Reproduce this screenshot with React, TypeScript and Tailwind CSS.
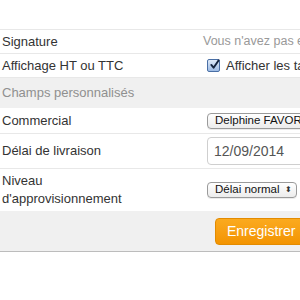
import React from 'react';

const font = { fontFamily: '"Liberation Sans", Arial, sans-serif' };

const Row: React.FC<{ label: React.ReactNode; h: string; children?: React.ReactNode }> = ({ label, h, children }) => (
  <div className={`flex items-center border-b border-[#e8e8e8] ${h}`}>
    <div className="w-[207px] shrink-0 pl-[2px] text-[13px] leading-[18px] text-[#333]">{label}</div>
    <div className="flex min-w-0 flex-1 items-center whitespace-nowrap">{children}</div>
  </div>
);

const FakeSelect: React.FC<{ text: string; w: string; arrow?: boolean }> = ({ text, w, arrow }) => (
  <div
    className={`flex h-[16px] shrink-0 items-center justify-between whitespace-nowrap rounded-[4px] border border-[#9a9a9a] bg-gradient-to-b from-white to-[#ececec] pl-[7px] pr-[4px] text-[11.5px] text-[#111] shadow-[0_1px_0_rgba(0,0,0,0.08)] ${w}`}
  >
    <span>{text}</span>
    {arrow && <span className="text-[8px] leading-none text-[#333]">⬍</span>}
  </div>
);

const App: React.FC = () => {
  return (
    <div className="h-[300px] w-[300px] overflow-hidden bg-white" style={font}>
      <div className="h-[30px] border-b border-[#e8e8e8]" />
      <Row label="Signature" h="h-[24px]">
        <span className="-ml-[4px] text-[12.5px] text-[#999]">Vous n'avez pas encore de signature</span>
      </Row>
      <Row label="Affichage HT ou TTC" h="h-[24px]">
        <span className="mr-[6px] flex h-[13px] w-[13px] shrink-0 items-center justify-center rounded-[2px] border border-[#4a6fa5] bg-gradient-to-b from-[#dfeaf8] to-[#9dbbe4]">
          <svg viewBox="0 0 12 12" className="h-[13px] w-[13px] -translate-y-[1px] translate-x-[1px]">
            <path d="M2.5 6.5 L5 9.5 L10.5 1.5" fill="none" stroke="#13233d" strokeWidth="2" strokeLinecap="round" strokeLinejoin="round" />
          </svg>
        </span>
        <span className="text-[13px] text-[#333]">Afficher les tarifs TTC</span>
      </Row>
      <div className="flex h-[30px] items-center bg-[#f0f0f0] pl-[2px] text-[13px] text-[#8f8f8f]">
        Champs personnalisés
      </div>
      <Row label="Commercial" h="h-[26px]">
        <FakeSelect text="Delphine FAVORI" w="w-[120px]" />
      </Row>
      <Row label="Délai de livraison" h="h-[35px]">
        <div className="flex h-[28px] w-[120px] shrink-0 items-center rounded-[4px] border border-[#cfcfcf] pl-[6px] text-[14px] text-[#555]">
          12/09/2014
        </div>
      </Row>
      <div className="flex h-[42px] items-center">
        <div className="w-[207px] shrink-0 pl-[2px] text-[13px] leading-[18px] text-[#333]">
          Niveau
          <br />
          d'approvisionnement
        </div>
        <FakeSelect text="Délai normal" w="w-[90px]" arrow />
      </div>
      <div className="flex h-[41px] items-center border-b border-[#bcbcbc] bg-[#f0f0f0] pl-[215px]">
        <div className="flex h-[27px] w-[100px] shrink-0 items-center rounded-[4px] border border-[#e38b00] bg-gradient-to-b from-[#fbaa1e] to-[#f39400] pl-[11px] text-[14px] text-white">
          Enregistrer
        </div>
      </div>
    </div>
  );
};

export default App;
